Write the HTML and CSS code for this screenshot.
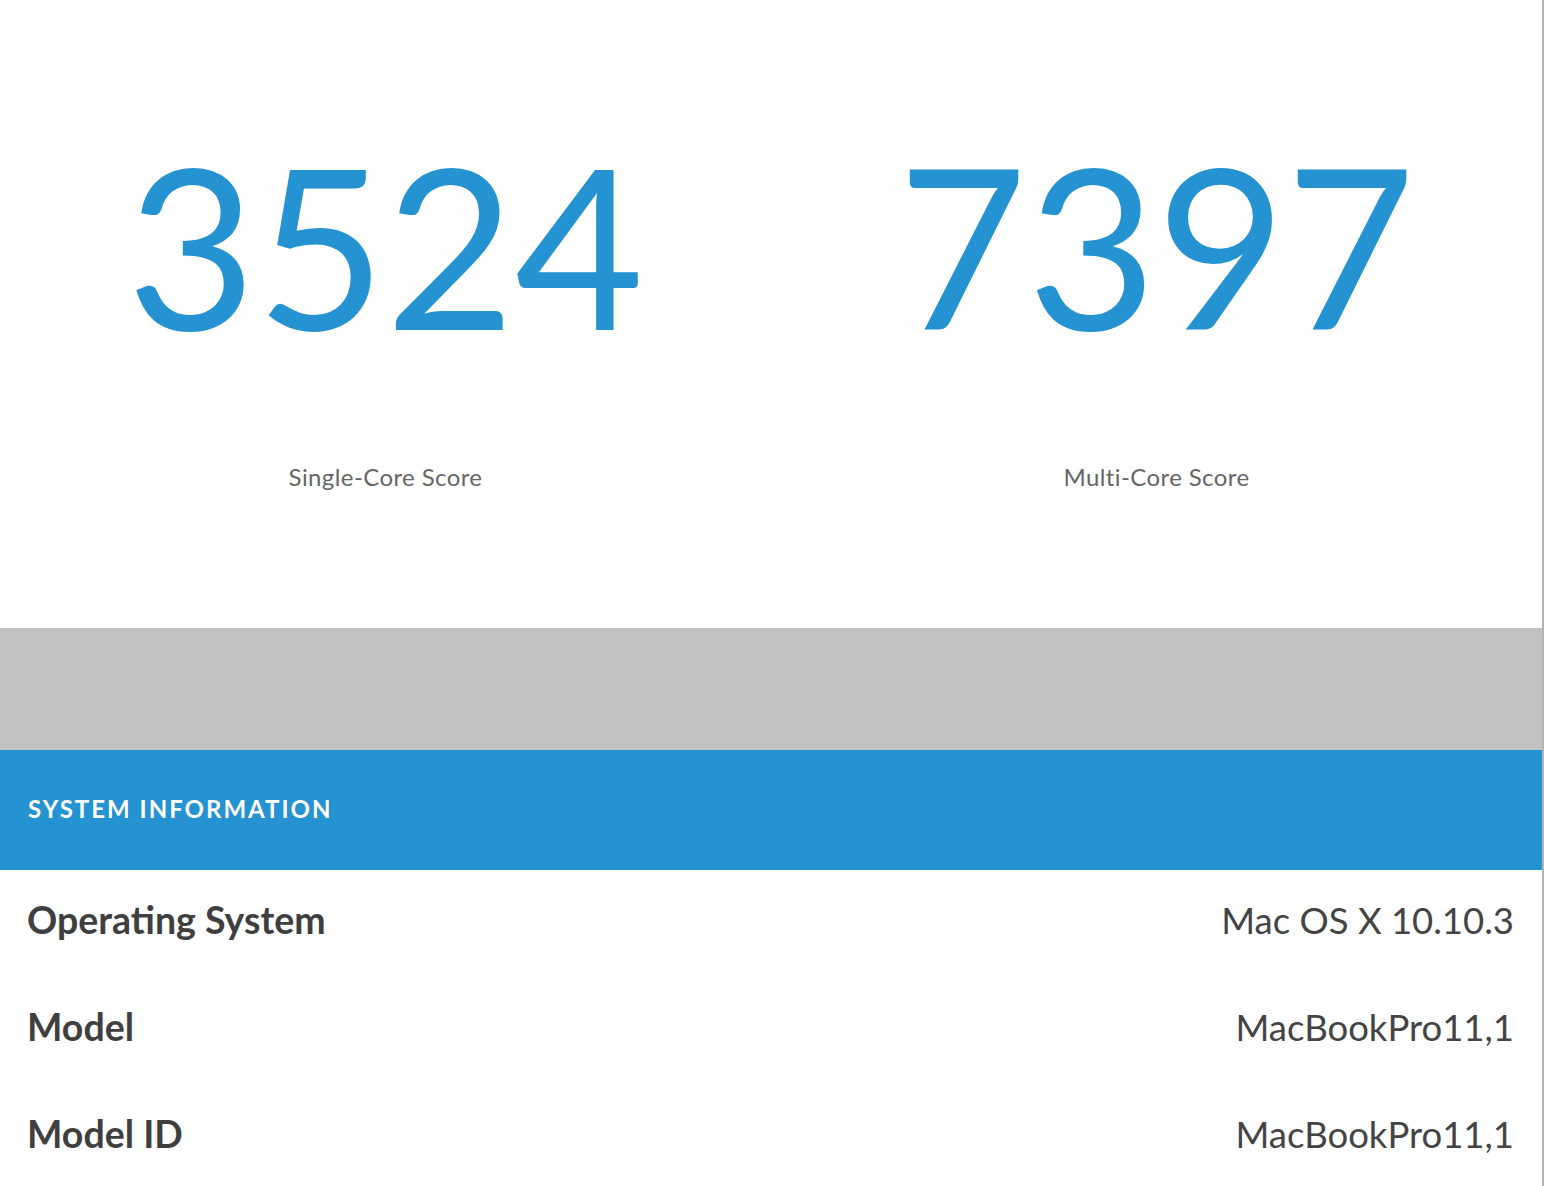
FILE: index.html
```html
<!DOCTYPE html>
<html lang="en">
<head>
  <meta charset="UTF-8" />
  <meta name="viewport" content="width=device-width, initial-scale=1.0"/>
  <title>Geekbench Results</title>
  <link rel="stylesheet" href="styles.css">
</head>
<body>

  <div class="page">
    <div class="result">
      <div class="scores">
        <div class="score">
          <div class="score-value">3524</div>
          <div class="score-label">Single-Core Score</div>
        </div>
        <div class="score">
          <div class="score-value">7397</div>
          <div class="score-label">Multi-Core Score</div>
        </div>
      </div>

      <div class="spacer"></div>

      <div class="section-header">System Information</div>

      <div class="info-row">
        <span class="info-name">Operating System</span>
        <span class="info-value">Mac OS X 10.10.3</span>
      </div>
      <div class="info-row">
        <span class="info-name">Model</span>
        <span class="info-value">MacBookPro11,1</span>
      </div>
      <div class="info-row">
        <span class="info-name">Model ID</span>
        <span class="info-value">MacBookPro11,1</span>
      </div>
    </div>

    <div class="window-edge"></div>
  </div>

</body>
</html>
```

FILE: styles.css
```css
* {
  box-sizing: border-box;
}

body {
  font-family: 'Lato', 'Noto Sans', sans-serif;
  background: #ffffff;
  margin: 0;
  padding: 0;
}

.page {
  display: flex;
  min-height: 100vh;
}

.result {
  width: 1542px;
  flex-shrink: 0;
}

.window-edge {
  width: 2px;
  background: #b4b4b4;
}

.scores {
  display: flex;
  height: 628px;
}

.score {
  flex: 1;
  display: flex;
  flex-direction: column;
  align-items: center;
  padding-top: 114px;
}

.score-value {
  font-size: 223px;
  font-weight: 400;
  line-height: 260px;
  color: #2592d1;
}

.score-label {
  margin-top: 88px;
  font-size: 24px;
  letter-spacing: 0.4px;
  color: #666666;
}

.spacer {
  height: 122px;
  background: #c1c1c1;
}

.section-header {
  display: flex;
  align-items: center;
  height: 120px;
  padding-left: 28px;
  padding-bottom: 4px;
  background: #2592d1;
  color: #ffffff;
  font-size: 24px;
  font-weight: 700;
  letter-spacing: 2px;
  text-transform: uppercase;
}

.info-row {
  display: flex;
  align-items: center;
  justify-content: space-between;
  height: 107px;
  padding: 0 28px 8px 27px;
  color: #3f3f3f;
}

.info-name {
  font-size: 37.5px;
  font-weight: 700;
}

.info-value {
  font-size: 36.5px;
  font-weight: 400;
  color: #444444;
}
```
